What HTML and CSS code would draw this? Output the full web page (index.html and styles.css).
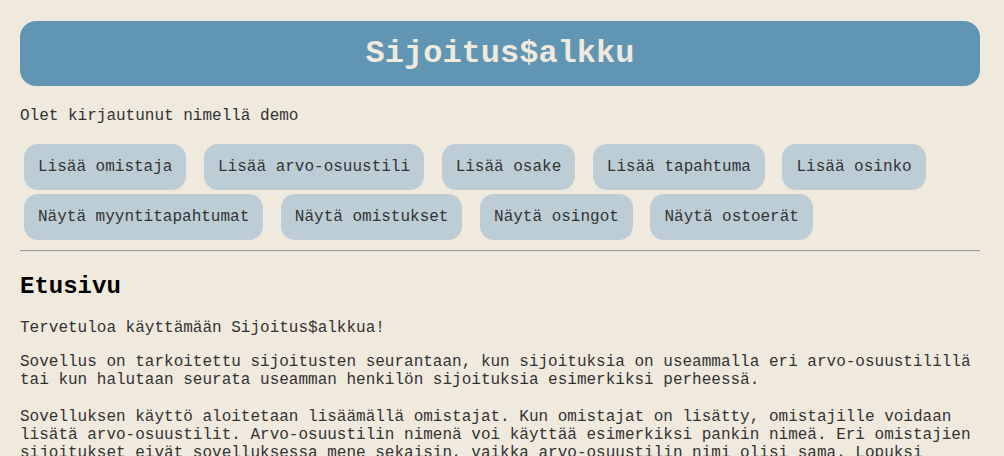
FILE: index.html
```html
<!DOCTYPE html>
<html lang="fi">
<head>
<meta charset="utf-8">
<title>Sijoitus$alkku</title>
<link rel="stylesheet" href="styles.css">
</head>
<body>
<header class="banner"><h1 class="title">Sijoitus$alkku</h1></header>
<p class="login">Olet kirjautunut nimellä demo</p>
<nav class="nav">
  <a class="btn" href="#">Lisää omistaja</a>
  <a class="btn" href="#">Lisää arvo-osuustili</a>
  <a class="btn" href="#">Lisää osake</a>
  <a class="btn" href="#">Lisää tapahtuma</a>
  <a class="btn" href="#">Lisää osinko</a>
  <a class="btn" href="#">Näytä myyntitapahtumat</a>
  <a class="btn" href="#">Näytä omistukset</a>
  <a class="btn" href="#">Näytä osingot</a>
  <a class="btn" href="#">Näytä ostoerät</a>
</nav>
<hr class="rule">
<main class="content">
  <h2 class="heading">Etusivu</h2>
  <p class="text">Tervetuloa käyttämään Sijoitus$alkkua!</p>
  <p class="text">Sovellus on tarkoitettu sijoitusten seurantaan, kun sijoituksia on useammalla eri arvo-osuustilillä tai kun halutaan seurata useamman henkilön sijoituksia esimerkiksi perheessä.</p>
  <p class="text text-spaced">Sovelluksen käyttö aloitetaan lisäämällä omistajat. Kun omistajat on lisätty, omistajille voidaan lisätä arvo-osuustilit. Arvo-osuustilin nimenä voi käyttää esimerkiksi pankin nimeä. Eri omistajien sijoitukset eivät sovelluksessa mene sekaisin, vaikka arvo-osuustilin nimi olisi sama. Lopuksi lisätään osakkeet ja tapahtumat.</p>
</main>
</body>
</html>
```
FILE: styles.css
```css
html, body {
  background: #f0e9dd;
}
body {
  margin: 21px 24px 0 20px;
  font-family: "Liberation Mono", "Courier New", monospace;
  font-size: 16px;
  line-height: 18px;
  color: #333;
}
.banner {
  background: #6095b4;
  border-radius: 16px;
  height: 65px;
  display: flex;
  align-items: center;
  justify-content: center;
}
.title {
  margin: 0;
  font-size: 32px;
  line-height: 36px;
  font-weight: bold;
  color: #f0e9dd;
}
.login {
  margin: 21px 0 19px 0;
}
.nav {
  display: flex;
  flex-wrap: wrap;
  gap: 4px 17.6px;
  padding-left: 4px;
}
.btn {
  display: block;
  background: #bccdd6;
  color: #333;
  text-decoration: none;
  padding: 14px 14px;
  border-radius: 14px;
}
.rule {
  margin: 10px 0 0 0;
  border: 0;
  border-top: 1px solid #9a9a9a;
  border-bottom: 1px solid #e6e2da;
}
.heading {
  margin: 21px 0 0 0;
  font-size: 24px;
  line-height: 28px;
  font-weight: bold;
  color: #000;
}
.text {
  margin: 18px 0 0 0;
}
.text + .text {
  margin-top: 16px;
}
.text + .text-spaced {
  margin-top: 19px;
}
```
